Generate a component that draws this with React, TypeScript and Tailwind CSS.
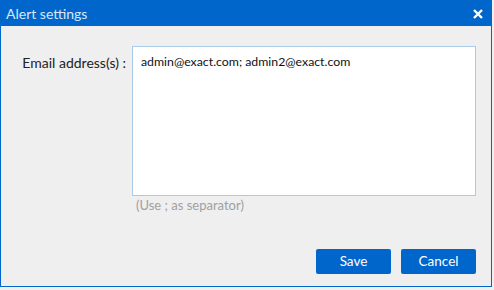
export default function App() {
  return (
    <div className="h-[290px] w-[494px] bg-[#f0f0f0] font-['Lato',sans-serif]">
      <div className="flex h-[287px] w-[492px] flex-col border border-[#0066cc] bg-[#efefef]">
        <div className="flex h-[25px] items-center justify-between bg-[#0066cc] pl-[5px] pr-[8px]">
          <span className="text-[14px] text-[#dbe6f5]">Alert settings</span>
          <svg width="10" height="10" viewBox="0 0 10 10" aria-hidden>
            <path d="M1 1L9 9M9 1L1 9" stroke="#fff" strokeWidth="2.4" />
          </svg>
        </div>
        <div className="flex flex-1 flex-col pl-[20px] pr-[15px] pt-[20px]">
          <div className="flex gap-[6px]">
            <label className="mt-[6px] w-[105px] whitespace-nowrap text-right text-[14px] text-[#222]">Email address(s) :</label>
            <div className="flex flex-col">
              <div className="h-[150px] w-[344px] border border-[#a9cbe8] bg-white px-[8px] pt-[6px] text-[12.3px] text-[#111]">
                admin@exact.com; admin2@exact.com
              </div>
              <span className="pl-[4px] text-[13px] text-[#a0a0a0]">(Use ; as separator)</span>
            </div>
          </div>
          <div className="mt-auto mb-[12px] flex justify-end gap-[10px]">
            <button className="h-[25px] w-[75px] rounded-[2px] bg-[#0066cc] text-[13.5px] text-white">Save</button>
            <button className="h-[25px] w-[75px] rounded-[2px] bg-[#0066cc] text-[13.5px] text-white">Cancel</button>
          </div>
        </div>
      </div>
    </div>
  );
}
